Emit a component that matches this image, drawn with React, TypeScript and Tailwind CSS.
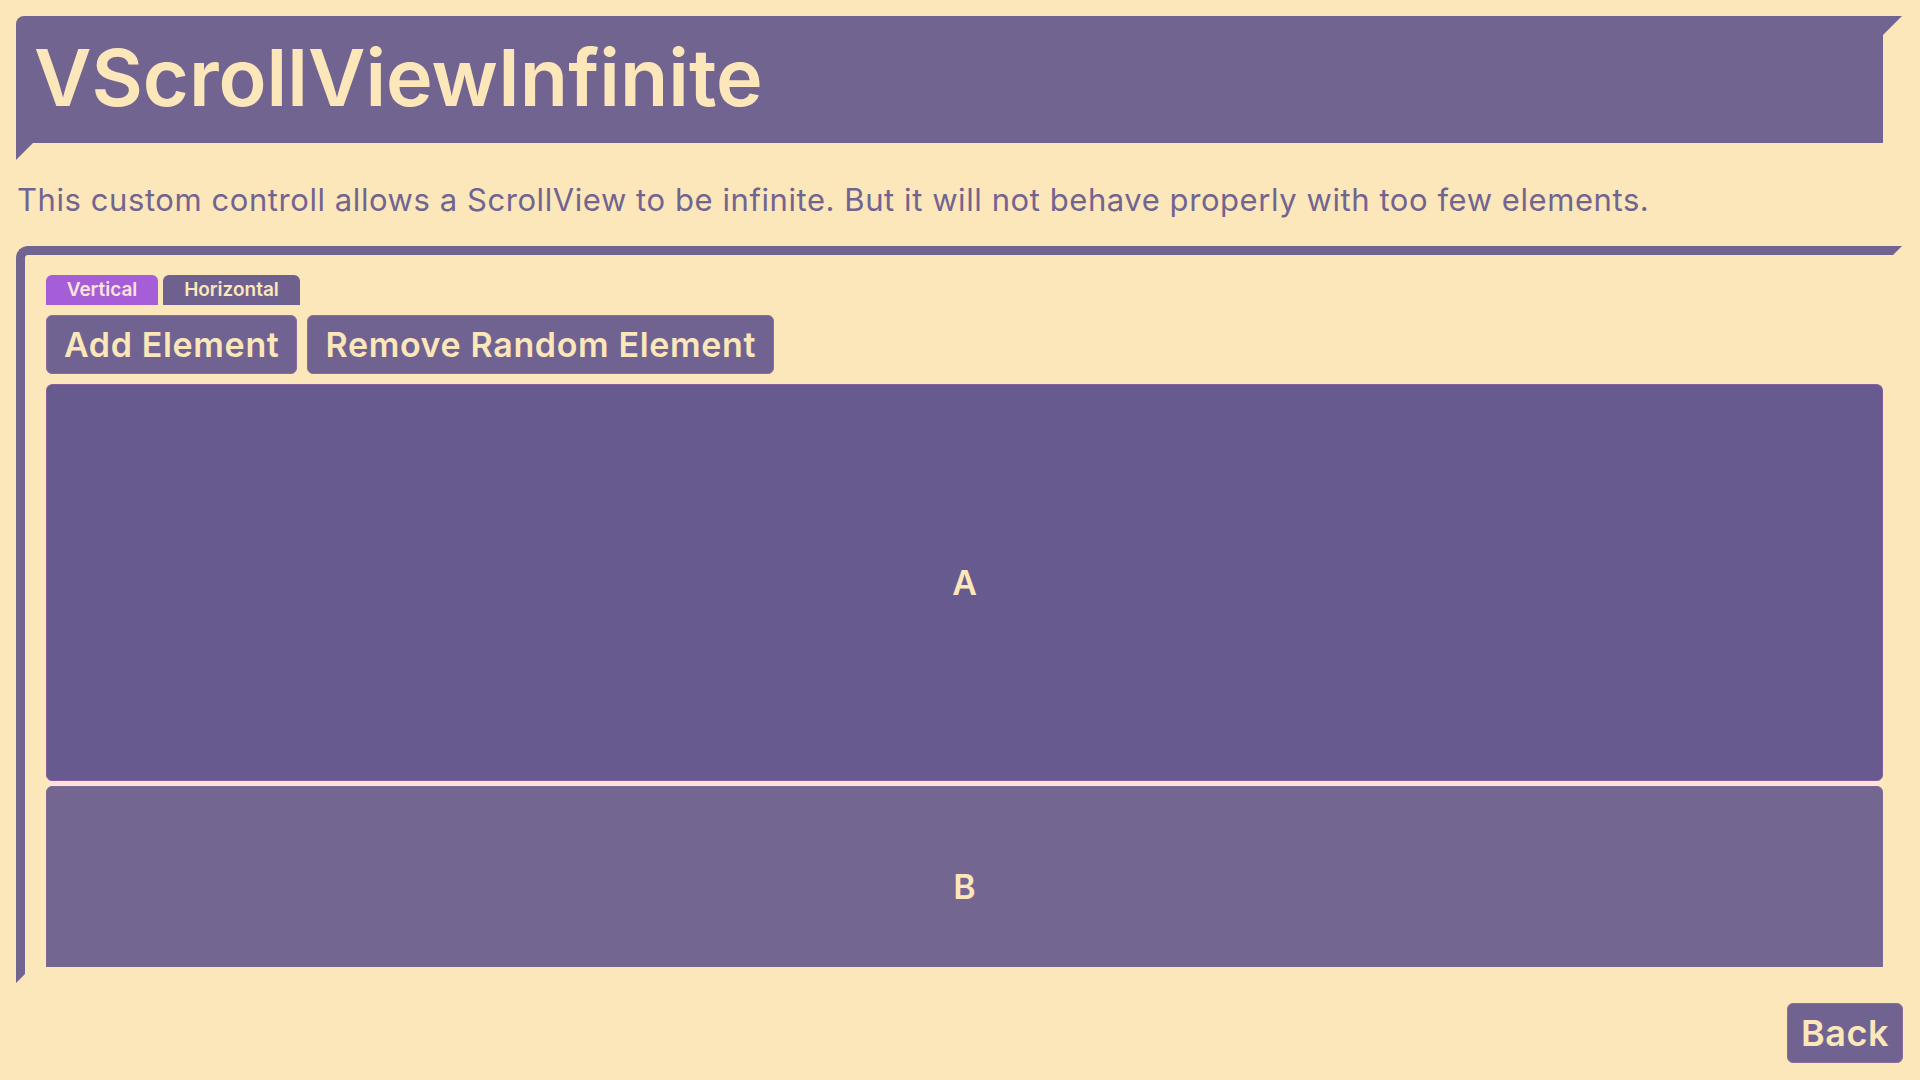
export default function App() {
  return (
    <div className="flex h-[1080px] w-full flex-col overflow-hidden bg-[#fce7ba] text-[#fce7ba] [font-family:Inter,'Liberation_Sans',sans-serif]">
      {/* title banner */}
      <div className="ml-4 mr-[18px] mt-4 h-[144px] rounded-tl-lg bg-[#726491] pl-[18px] pt-[22px] [clip-path:polygon(0_0,100%_0,calc(100%_-_19px)_19px,calc(100%_-_19px)_calc(100%_-_17px),17px_calc(100%_-_17px),0_100%)]">
        <h1 className="text-[79px] font-semibold leading-none">VScrollViewInfinite</h1>
      </div>

      <p className="ml-[17px] mt-[22px] text-[31px] leading-[36px] tracking-[0.57px] text-[#726491]">
        This custom controll allows a ScrollView to be infinite. But it will not behave properly with too few elements.
      </p>

      {/* demo panel */}
      <div className="ml-4 mr-[18px] mt-[28px] h-[737px] rounded-tl-xl border-l-[9px] border-t-[9px] border-[#726491] pl-[21px] pt-[20px] [clip-path:polygon(0_0,100%_0,calc(100%_-_9px)_9px,calc(100%_-_9px)_calc(100%_-_9px),9px_calc(100%_-_9px),0_100%)]">
        <div className="flex gap-[5px]">
          <button className="h-[30px] w-[112px] rounded-t-md bg-[#a55ed8] text-[19px] font-semibold text-[#fde3dc]">Vertical</button>
          <button className="h-[30px] w-[137px] rounded-t-md bg-[#6e6190] text-[19px] font-semibold">Horizontal</button>
        </div>

        <div className="mt-[10px] flex gap-[10px]">
          <button className="h-[59px] rounded-md border border-[#8a6d9b] bg-[#716391] px-[17px] text-[34px] font-semibold tracking-[0.65px]">
            Add Element
          </button>
          <button className="h-[59px] rounded-md border border-[#8a6d9b] bg-[#716391] px-[17px] text-[34px] font-semibold tracking-[0.65px]">
            Remove Random Element
          </button>
        </div>

        <div className="mt-[10px] h-[583px] w-[1837px] overflow-hidden rounded-t-md">
          <div className="flex h-[397px] items-center justify-center rounded-md border border-[#86609c] bg-[#665a8e] text-[34px] font-semibold">
            A
          </div>
          <div className="mx-[1px] h-[5px] bg-[#ffe2d8]" />
          <div className="flex h-[200px] items-center justify-center rounded-md border border-[#7d6a96] bg-[#736792] text-[34px] font-semibold">
            B
          </div>
        </div>
      </div>

      <button className="mr-[17px] mt-5 h-[60px] w-[116px] self-end rounded-md border border-[#8a6d9b] bg-[#716391] text-[36px] font-semibold tracking-[0.5px]">
        Back
      </button>
    </div>
  )
}
